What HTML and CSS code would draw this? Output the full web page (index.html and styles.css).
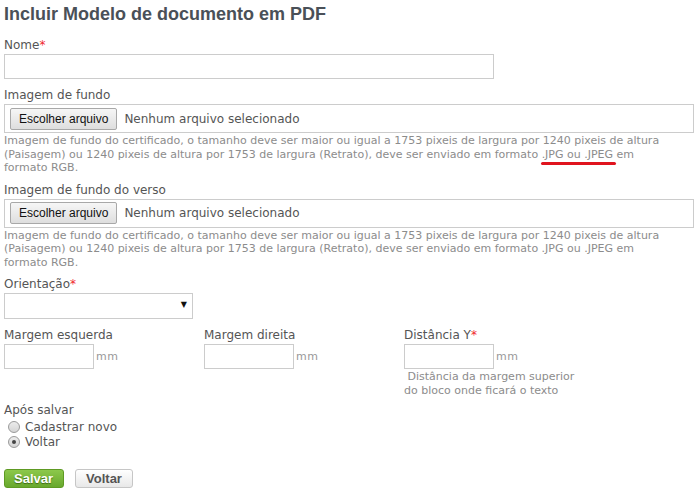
FILE: index.html
```html
<!DOCTYPE html>
<html lang="pt-BR">

<head>
    <meta charset="UTF-8">
    <meta name="viewport" content="width=device-width, initial-scale=1.0">
    <title>Incluir Modelo de documento em PDF</title>

    <link rel="stylesheet" href="styles.css">

</head>

<body>

    <h1 class="page-title">Incluir Modelo de documento em PDF</h1>

    <form class="form-modelo">
        <div class="field">
            <label class="lbl">Nome<span class="req">*</span></label>
            <input type="text" class="ipt ipt-nome">
        </div>

        <div class="field">
            <label class="lbl">Imagem de fundo</label>
            <div class="file-box">
                <button type="button" class="file-btn">Escolher arquivo</button>
                <span class="file-name">Nenhum arquivo selecionado</span>
            </div>
            <p class="help">Imagem de fundo do certificado, o tamanho deve ser maior ou igual a 1753 pixeis de largura por 1240 pixeis de altura (Paisagem) ou 1240 pixeis de altura por 1753 de largura (Retrato), deve ser enviado em formato <span class="mark">.JPG ou .JPEG</span> em<br>formato RGB.</p>
        </div>

        <div class="field">
            <label class="lbl">Imagem de fundo do verso</label>
            <div class="file-box">
                <button type="button" class="file-btn">Escolher arquivo</button>
                <span class="file-name">Nenhum arquivo selecionado</span>
            </div>
            <p class="help">Imagem de fundo do certificado, o tamanho deve ser maior ou igual a 1753 pixeis de largura por 1240 pixeis de altura (Paisagem) ou 1240 pixeis de altura por 1753 de largura (Retrato), deve ser enviado em formato .JPG ou .JPEG em<br>formato RGB.</p>
        </div>

        <div class="field">
            <label class="lbl">Orientação<span class="req">*</span></label>
            <div class="select-box"><span class="arrow">&#9660;</span></div>
        </div>

        <div class="margens">
            <div class="col">
                <label class="lbl">Margem esquerda</label>
                <div class="unit-row"><input type="text" class="ipt ipt-mm"><span class="unit">mm</span></div>
            </div>
            <div class="col">
                <label class="lbl">Margem direita</label>
                <div class="unit-row"><input type="text" class="ipt ipt-mm"><span class="unit">mm</span></div>
            </div>
            <div class="col">
                <label class="lbl">Distância Y<span class="req">*</span></label>
                <div class="unit-row"><input type="text" class="ipt ipt-mm"><span class="unit">mm</span></div>
                <p class="help help-y">&nbsp;Distância da margem superior<br>do bloco onde ficará o texto</p>
            </div>
        </div>

        <div class="field apos">
            <label class="lbl">Após salvar</label>
            <div class="radio"><span class="radio-dot"></span>Cadastrar novo</div>
            <div class="radio"><span class="radio-dot checked"></span>Voltar</div>
        </div>

        <div class="acoes">
            <a href="javascript:;" class="btn btn-salvar">Salvar</a>
            <a href="javascript:;" class="btn btn-voltar">Voltar</a>
        </div>
    </form>

</body>

</html>
```

FILE: styles.css
```css
body {
    margin: 0;
    padding: 0 4px;
    background-color: #fff;
    font-family: "DejaVu Sans", Verdana, sans-serif;
    font-size: 12px;
    color: #555;
}

h1,
p,
form {
    margin: 0;
    padding: 0;
}

.page-title {
    padding-top: 3px;
    height: 33px;
    font-family: "Liberation Sans", Arial, sans-serif;
    font-size: 18px;
    font-weight: bold;
    line-height: 22px;
    color: #4a5058;
}

.field {
    margin-bottom: 7px;
}

.lbl {
    display: block;
    height: 18px;
    line-height: 18px;
    color: #555;
}

.req {
    color: #f0282d;
}

.ipt {
    display: block;
    box-sizing: border-box;
    border: 1px solid #ccc;
    background-color: #fff;
    margin: 0;
    padding: 0 3px;
}

.ipt-nome {
    width: 490px;
    height: 25px;
}

.file-box {
    display: flex;
    align-items: center;
    box-sizing: border-box;
    width: 690px;
    height: 29px;
    padding: 0 5px;
    border: 1px solid #ccc;
}

.file-btn {
    height: 22px;
    padding: 0 8px;
    margin: 0 7px 0 0;
    font-family: "Liberation Sans", Arial, sans-serif;
    font-size: 12px;
    color: #111;
    border: 1px solid #a8a8a8;
    border-radius: 2px;
    background: linear-gradient(#f6f6f6, #dedede);
}

.file-name {
    color: #555;
}

.help {
    margin-top: 1px;
    margin-bottom: -1px;
    font-size: 11px;
    line-height: 13.5px;
    color: #8c8c8c;
}

.mark {
    position: relative;
}

.mark::after {
    content: "";
    position: absolute;
    left: -1px;
    right: -3px;
    bottom: -4px;
    height: 3px;
    border-radius: 2px;
    background-color: #e0141e;
}

.select-box {
    position: relative;
    box-sizing: border-box;
    width: 189px;
    height: 26px;
    border: 1px solid #ccc;
}

.select-box .arrow {
    position: absolute;
    right: 5px;
    top: 6px;
    font-size: 8px;
    color: #111;
}

.margens {
    display: grid;
    grid-template-columns: 200px 200px 200px;
    height: 75px;
}

.unit-row {
    display: flex;
    align-items: center;
}

.ipt-mm {
    width: 90px;
    height: 25px;
}

.unit {
    margin-left: 2px;
    font-size: 11px;
    color: #999;
    letter-spacing: 0.5px;
}

.radio {
    display: flex;
    align-items: center;
    height: 15px;
    padding-left: 4px;
    color: #555;
}

.radio-dot {
    box-sizing: border-box;
    width: 12px;
    height: 12px;
    margin-right: 5px;
    border: 1px solid #9a9a9a;
    border-radius: 50%;
    background: linear-gradient(#ececec, #d4d4d4);
    position: relative;
}

.radio-dot.checked::after {
    content: "";
    position: absolute;
    left: 3px;
    top: 3px;
    width: 4px;
    height: 4px;
    border-radius: 50%;
    background-color: #444;
}

.acoes {
    display: flex;
    gap: 11px;
    margin-top: 20px;
}

.btn {
    display: block;
    box-sizing: border-box;
    height: 19px;
    line-height: 17px;
    padding: 0 9px;
    font-family: "Liberation Sans", Arial, sans-serif;
    font-size: 13px;
    font-weight: bold;
    text-decoration: none;
    border-radius: 3px;
}

.btn-salvar {
    width: 60px;
    color: #fff;
    text-shadow: 0 1px 1px #3d6b12;
    border: 1px solid #5e9a23;
    background: linear-gradient(#8cc84b, #68a82d);
}

.btn-voltar {
    width: 58px;
    color: #555;
    border: 1px solid #c6c6c6;
    background: linear-gradient(#fff, #e8e8e8);
    text-align: center;
}
```
